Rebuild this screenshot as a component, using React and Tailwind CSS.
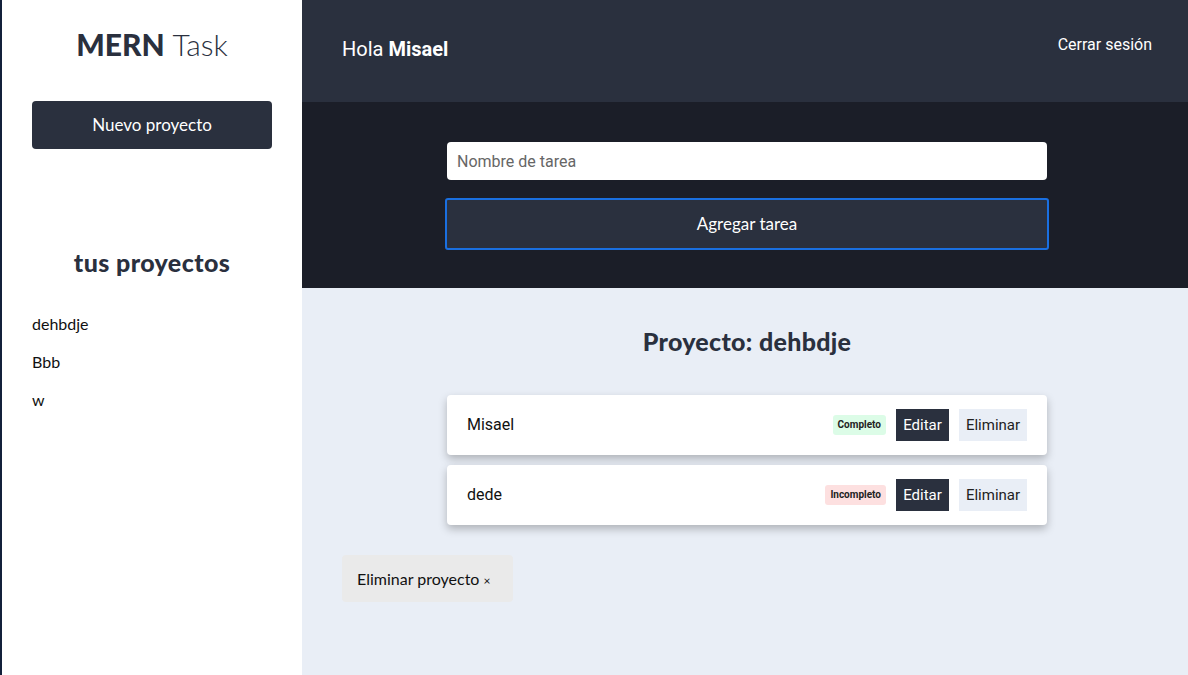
export default function App() {
  const raleway = { fontFamily: 'Lato, "Open Sans", sans-serif' };
  const roboto = { fontFamily: 'Roboto, "Liberation Sans", sans-serif' };
  const tasks = [
    { name: 'Misael', done: true },
    { name: 'dede', done: false },
  ];
  return (
    <div className="flex w-[1188px] h-[675px] overflow-hidden bg-[#e9eef6]">
      <aside className="w-[302px] shrink-0 bg-white border-l-2 border-[#13203a] flex flex-col px-[30px]" style={raleway}>
        <h1 className="mt-[26px] text-center text-[30px] leading-[36px] text-[#2a303e]">
          <span className="font-black">MERN</span> <span className="font-light">Task</span>
        </h1>
        <button className="mt-[39px] h-[48px] w-full rounded-[4px] bg-[#2a303e] text-white text-[17px]">Nuevo proyecto</button>
        <h2 className="mt-[98px] text-center text-[25px] leading-[30px] font-black tracking-[0.4px] text-[#2a303e]">tus proyectos</h2>
        <ul className="mt-[37px] flex flex-col gap-[18px] text-[16px] leading-[20px] text-[#111]">
          <li>dehbdje</li>
          <li>Bbb</li>
          <li>w</li>
        </ul>
      </aside>
      <main className="flex-1 flex flex-col">
        <header className="h-[102px] bg-[#2a303e] flex items-start justify-between pl-[40px] pr-[36px]" style={roboto}>
          <p className="mt-[36px] text-[20px] leading-[26px] text-white">Hola <span className="font-bold">Misael</span></p>
          <a className="mt-[35px] text-[16px] leading-[20px] text-white">Cerrar sesión</a>
        </header>
        <section className="h-[186px] bg-[#1b1e28] flex flex-col items-center pt-[40px] pl-[4px]">
          <input
            className="w-[600px] h-[38px] rounded-[4px] bg-white px-[10px] text-[16px] placeholder-[#666] outline-none"
            style={roboto}
            placeholder="Nombre de tarea"
          />
          <button
            className="mt-[18px] w-[604px] h-[52px] rounded-[3px] bg-[#2a303e] border-2 border-[#1a6fe0] text-white text-[17px]"
            style={raleway}
          >
            Agregar tarea
          </button>
        </section>
        <section className="flex-1 flex flex-col pl-[40px] pr-[36px]">
          <h2 className="mt-[38px] text-center text-[25px] leading-[30px] font-black tracking-[0.3px] text-[#2a303e]" style={raleway}>Proyecto: dehbdje</h2>
          <ul className="mt-[39px] flex flex-col items-center gap-[10px]" style={roboto}>
            {tasks.map((t) => (
              <li key={t.name} className="w-[600px] h-[60px] bg-white rounded-[4px] shadow-[0_4px_8px_rgba(0,0,0,0.25)] flex items-center pl-[20px] pr-[20px]">
                <span className="flex-1 text-[16px] text-[#111]">{t.name}</span>
                <span
                  className={`px-[5px] h-[20px] leading-[20px] rounded-[3px] text-[10px] font-bold text-[#222] ${t.done ? 'bg-[#dcfce7]' : 'bg-[#fde0e0]'}`}
                >
                  {t.done ? 'Completo' : 'Incompleto'}
                </span>
                <button className="ml-[10px] h-[32px] w-[53px] bg-[#2a303e] text-white text-[15px]">Editar</button>
                <button className="ml-[10px] h-[32px] w-[68px] bg-[#e9eef6] text-[#222] text-[15px]">Eliminar</button>
              </li>
            ))}
          </ul>
          <div className="mt-[30px]">
            <button className="h-[47px] px-[15px] w-[171px] rounded-[4px] bg-[#eaeaea] text-[16px] text-[#111] text-left" style={raleway}>
              Eliminar proyecto <span className="text-[12px]">×</span>
            </button>
          </div>
        </section>
      </main>
    </div>
  );
}
